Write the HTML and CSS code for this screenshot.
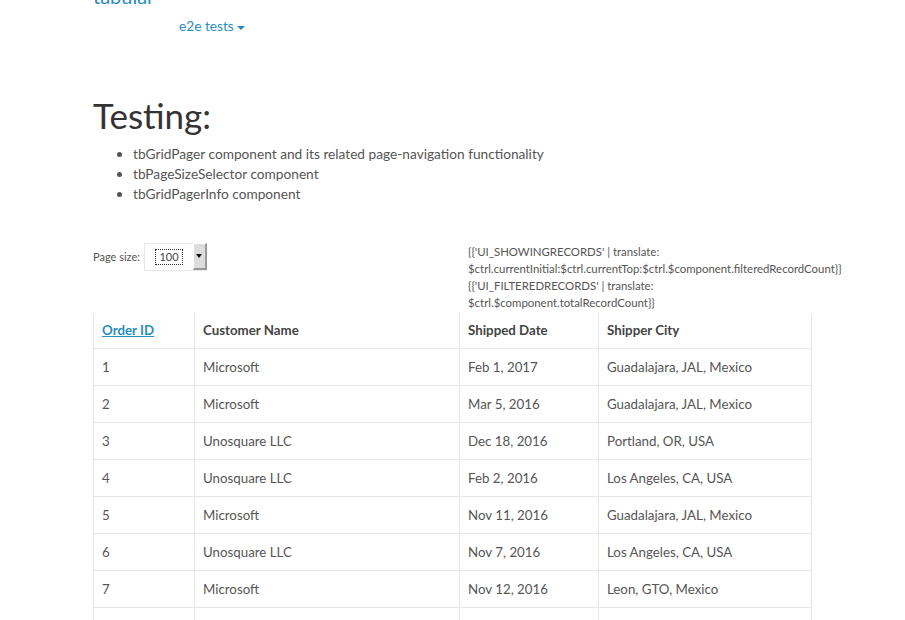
FILE: index.html
```html
<!DOCTYPE html>
<html>
<head>
<meta charset="utf-8">
<link rel="stylesheet" href="styles.css">
</head>
<body>
<div class="container">
  <header class="topbar">
    <div class="brand">tabular</div>
    <nav class="nav"><a class="dropdown">e2e tests<span class="caret"></span></a></nav>
  </header>
  <h1 class="title">Testing:</h1>
  <ul class="features">
    <li>tbGridPager component and its related page-navigation functionality</li>
    <li>tbPageSizeSelector component</li>
    <li>tbGridPagerInfo component</li>
  </ul>
  <div class="toolbar">
    <div class="pagesize">
      <span class="label">Page size:</span>
      <div class="select"><span class="value"><span class="focus">100</span></span><span class="arrow"><span class="tri"></span></span></div>
    </div>
    <div class="info">
      <div>{{'UI_SHOWINGRECORDS' | translate:</div>
      <div>$ctrl.currentInitial:$ctrl.currentTop:$ctrl.$component.filteredRecordCount}}</div>
      <div>{{'UI_FILTEREDRECORDS' | translate:</div>
      <div>$ctrl.$component.totalRecordCount}}</div>
    </div>
  </div>
  <div class="tablewrap">
    <table class="grid">
      <thead>
        <tr><th class="c1"><a class="sort">Order ID </a></th><th class="c2">Customer Name</th><th class="c3">Shipped Date</th><th class="c4">Shipper City</th></tr>
      </thead>
      <tbody>
        <tr><td>1</td><td>Microsoft</td><td>Feb 1, 2017</td><td>Guadalajara, JAL, Mexico</td></tr>
        <tr><td>2</td><td>Microsoft</td><td>Mar 5, 2016</td><td>Guadalajara, JAL, Mexico</td></tr>
        <tr><td>3</td><td>Unosquare LLC</td><td>Dec 18, 2016</td><td>Portland, OR, USA</td></tr>
        <tr><td>4</td><td>Unosquare LLC</td><td>Feb 2, 2016</td><td>Los Angeles, CA, USA</td></tr>
        <tr><td>5</td><td>Microsoft</td><td>Nov 11, 2016</td><td>Guadalajara, JAL, Mexico</td></tr>
        <tr><td>6</td><td>Unosquare LLC</td><td>Nov 7, 2016</td><td>Los Angeles, CA, USA</td></tr>
        <tr><td>7</td><td>Microsoft</td><td>Nov 12, 2016</td><td>Leon, GTO, Mexico</td></tr>
        <tr class="empty"><td></td><td></td><td></td><td></td></tr>
      </tbody>
    </table>
  </div>
</div>
</body>
</html>
```
FILE: styles.css
```css
html, body {
  margin: 0;
  padding: 0;
  background: #fff;
}
body {
  font-family: Lato, "Open Sans", sans-serif;
  font-size: 14px;
  line-height: 20px;
  color: #555;
  overflow: hidden;
  height: 620px;
}
.container {
  width: 719px;
  margin-left: 93px;
}
.topbar {
  height: 52px;
}
.brand {
  font-size: 20px;
  line-height: 20px;
  color: #2a8dbf;
  margin-top: -14px;
  height: 20px;
}
.nav {
  padding-left: 86px;
  margin-top: 10px;
}
.dropdown {
  color: #2a8dbf;
  font-size: 13.7px;
  line-height: 20px;
}
.caret {
  display: inline-block;
  width: 0;
  height: 0;
  margin-left: 3px;
  vertical-align: middle;
  border-top: 4px solid #2a8dbf;
  border-left: 4px solid transparent;
  border-right: 4px solid transparent;
}
.title {
  font-size: 35px;
  font-weight: 400;
  color: #333;
  line-height: 40px;
  margin: 57px 0 0 0;
}
.features {
  margin: 9px 0 0 0;
  padding-left: 40px;
  font-size: 13.7px;
}
.features li {
  line-height: 20px;
}
.toolbar {
  display: grid;
  grid-template-columns: 359px 360px;
  margin-top: 38px;
}
.pagesize {
  display: flex;
  align-items: flex-start;
  padding-top: 1px;
}
.label {
  font-size: 11px;
  line-height: 27px;
  margin-right: 4px;
  color: #555;
}
.select {
  display: flex;
  width: 62px;
  height: 26px;
  border: 1px solid #e8e8e8;
  border-right: none;
  background: #fff;
}
.value {
  flex: 1;
  display: flex;
  align-items: center;
  justify-content: center;
}
.focus {
  font-size: 11px;
  line-height: 14px;
  color: #444;
  border: 1px dotted #333;
  padding: 0 3px;
}
.arrow {
  width: 14px;
  background: #ddd;
  border-right: 2px solid #999;
  border-bottom: 2px solid #999;
  border-left: 1px solid #fff;
  border-top: 1px solid #fff;
  display: flex;
  align-items: center;
  justify-content: center;
  box-sizing: border-box;
  height: 27px;
  margin-top: -1px;
}
.tri {
  width: 0;
  height: 0;
  border-top: 4px solid #111;
  border-left: 3px solid transparent;
  border-right: 3px solid transparent;
}
.info {
  padding-left: 16px;
  font-size: 11.4px;
  line-height: 17px;
  color: #555;
  margin-top: 1px;
}
.tablewrap {
  margin-top: 1px;
  border: 1px solid #e6e6e6;
  border-top: none;
  border-bottom: none;
  border-radius: 4px 4px 0 0;
  box-sizing: border-box;
}
.grid {
  width: 100%;
  border-collapse: collapse;
  table-layout: fixed;
  font-size: 13.3px;
}
.grid th, .grid td {
  padding: 8px 8px;
  text-align: left;
  line-height: 20px;
  border-left: 1px solid #e6e6e6;
  border-bottom: 1px solid #e6e6e6;
  vertical-align: top;
  white-space: nowrap;
}
.grid tr th:first-child, .grid tr td:first-child {
  border-left: none;
}
.grid th {
  font-weight: 700;
  color: #444;
}
.grid tr.empty td {
  height: 20px;
}
.c1 { width: 84px; }
.c2 { width: 248px; }
.c3 { width: 122px; }
.sort {
  color: #2a8dbf;
  text-decoration: underline;
}
```
